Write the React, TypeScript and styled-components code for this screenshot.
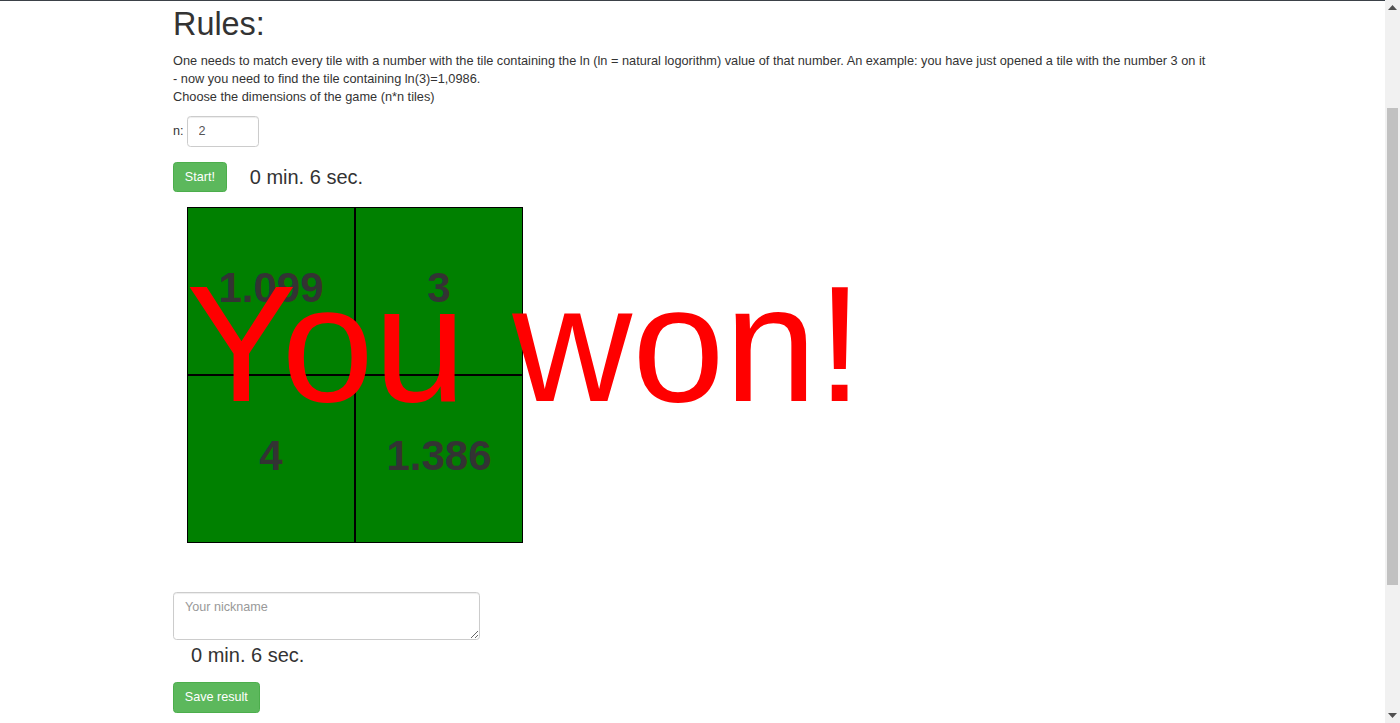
import React from "react";
import styled, { createGlobalStyle } from "styled-components";

const GlobalStyle = createGlobalStyle`
  html, body { margin: 0; padding: 0; background: #fff; }
  body {
    font-family: "Liberation Sans", Arial, Helvetica, sans-serif;
    font-size: 12.6px;
    line-height: 18px;
    color: #333;
    overflow: hidden;
  }
  * { box-sizing: border-box; }
`;

const Page = styled.div`
  display: flex;
  height: 723px;
  overflow: hidden;
`;

const Main = styled.main`
  flex: 1;
  border-top: 1px solid #3b4148;
  padding: 6px 0 0 173px;
`;

const Content = styled.div`
  width: 1038px;
`;

const Title = styled.h1`
  margin: 0;
  font-size: 32.4px;
  line-height: 35.6px;
  font-weight: 500;
  color: #333;
`;

const Rules = styled.p`
  margin: 9px 0 10px;
  font-size: 12.75px;
`;

const FieldRow = styled.div`
  display: flex;
  align-items: center;
  height: 31px;
`;

const Label = styled.label`
  margin-right: 3px;
`;

const NumberInput = styled.input`
  width: 72px;
  height: 31px;
  padding: 5px 11px;
  border: 1px solid #ccc;
  border-radius: 3.6px;
  font: inherit;
  color: #555;
  box-shadow: inset 0 1px 1px rgba(0, 0, 0, 0.075);
`;

const ActionRow = styled.div<{ $gap: number }>`
  display: flex;
  align-items: center;
  gap: ${(p) => p.$gap}px;
  margin-top: 15px;
`;

const Button = styled.button`
  height: 30.6px;
  padding: 5px 10.8px;
  border: 1px solid #4cae4c;
  border-radius: 3.6px;
  background: #5cb85c;
  color: #fff;
  font-family: inherit;
  font-size: 12.6px;
  line-height: 18px;
`;

const Timer = styled.span<{ $indent?: number }>`
  font-size: 20px;
  line-height: 24px;
  color: #333;
  padding-left: ${(p) => p.$indent ?? 0}px;
`;

const GameArea = styled.div`
  position: relative;
  margin: 15px 0 0 14px;
  width: 336px;
`;

const Board = styled.div`
  display: grid;
  grid-template-columns: repeat(2, 168px);
  grid-auto-rows: 168px;
`;

const Tile = styled.div`
  display: flex;
  align-items: center;
  justify-content: center;
  padding-bottom: 7px;
  background: #008000;
  border: 1px solid #000;
  font-size: 42px;
  font-weight: 700;
  color: #333;
`;

const WinText = styled.div`
  position: absolute;
  left: -1px;
  top: 54px;
  font-size: 166px;
  line-height: 1;
  color: #ff0000;
  white-space: nowrap;
  pointer-events: none;
`;

const Nickname = styled.textarea`
  display: block;
  margin-top: 49px;
  width: 307px;
  height: 48px;
  padding: 5px 11px;
  border: 1px solid #ccc;
  border-radius: 3.6px;
  font-family: inherit;
  font-size: 12.6px;
  line-height: 18px;
  color: #555;
  box-shadow: inset 0 1px 1px rgba(0, 0, 0, 0.075);
  &::placeholder { color: #999; }
`;

const ResultLine = styled.div`
  margin-top: 3px;
`;

const SaveRow = styled.div`
  margin-top: 15px;
`;

const ScrollTrack = styled.div`
  width: 15px;
  background: #f1f1f1;
  display: flex;
  flex-direction: column;
  align-items: center;
`;

const ArrowBox = styled.div`
  height: 15px;
  width: 15px;
  display: flex;
  align-items: center;
  justify-content: center;
`;

const Thumb = styled.div`
  width: 11px;
  margin-top: 93px;
  height: 477px;
  background: #c1c1c1;
`;

const Spacer = styled.div`
  flex: 1;
`;

const tiles = ["1.099", "3", "4", "1.386"];

export default function App() {
  return (
    <>
      <GlobalStyle />
      <Page>
        <Main>
          <Content>
            <Title>Rules:</Title>
            <Rules>
              One needs to match every tile with a number with the tile containing the ln (ln = natural
              logorithm) value of that number. An example: you have just opened a tile with the number 3
              on it - now you need to find the tile containing ln(3)=1,0986.
              <br />
              Choose the dimensions of the game (n*n tiles)
            </Rules>
            <FieldRow>
              <Label>n:</Label>
              <NumberInput defaultValue="2" />
            </FieldRow>
            <ActionRow $gap={23}>
              <Button>Start!</Button>
              <Timer>0 min. 6 sec.</Timer>
            </ActionRow>
            <GameArea>
              <Board>
                {tiles.map((t, i) => (
                  <Tile key={i}>{t}</Tile>
                ))}
              </Board>
              <WinText>You won!</WinText>
            </GameArea>
            <Nickname placeholder="Your nickname" />
            <ResultLine>
              <Timer $indent={18}>0 min. 6 sec.</Timer>
            </ResultLine>
            <SaveRow>
              <Button>Save result</Button>
            </SaveRow>
          </Content>
        </Main>
        <ScrollTrack>
          <ArrowBox>
            <svg width="9" height="5" viewBox="0 0 9 5">
              <path d="M0 5 L4.5 0 L9 5 Z" fill="#505050" />
            </svg>
          </ArrowBox>
          <Thumb />
          <Spacer />
          <ArrowBox>
            <svg width="9" height="5" viewBox="0 0 9 5">
              <path d="M0 0 L4.5 5 L9 0 Z" fill="#505050" />
            </svg>
          </ArrowBox>
        </ScrollTrack>
      </Page>
    </>
  );
}
